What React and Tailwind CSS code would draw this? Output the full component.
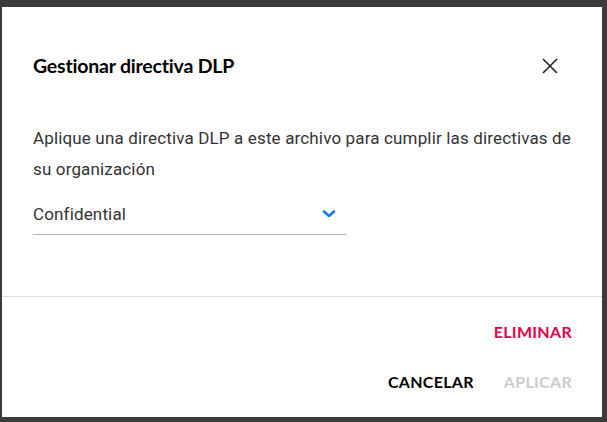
import React, { useState } from 'react';

function CloseIcon() {
  return (
    <svg width="18" height="18" viewBox="0 0 18 18" fill="none" stroke="#222" strokeWidth="1.6">
      <path d="M2 2 L16 16 M16 2 L2 16" />
    </svg>
  );
}

function Chevron() {
  return (
    <svg width="14" height="10" viewBox="0 0 14 10" fill="none" stroke="#0d7ff0" strokeWidth="2.6" strokeLinecap="round" strokeLinejoin="round">
      <path d="M2 2.5 L7 7 L12 2.5" />
    </svg>
  );
}

export default function App() {
  const [policy] = useState('Confidential');

  return (
    <div className="w-[607px] h-[422px] bg-[#3b3b3b] pt-[7px] pl-[2px] overflow-hidden" style={{ fontFamily: 'Lato, "Noto Sans", sans-serif' }}>
      <div className="w-[600px] h-[410px] bg-white flex flex-col">
        {/* Header */}
        <div className="flex items-center justify-between pl-[31px] pr-[43px] pt-[47px]">
          <h2 className="text-[19.5px] font-bold text-black leading-[24px] tracking-[-0.2px]">Gestionar directiva DLP</h2>
          <CloseIcon />
        </div>

        {/* Body */}
        <div className="pl-[31px] pr-[22px] pt-[45px] h-[218px] font-['Roboto',sans-serif]">
          <p className="text-[17px] leading-[31px] text-[#333] tracking-[0.15px]">
            Aplique una directiva DLP a este archivo para cumplir las directivas de su organización
          </p>
          <div className="mt-[17px] w-[313px] border-b border-[#b3b3b3] flex items-center justify-between pb-[8px] pr-[10px]">
            <span className="text-[17px] leading-[24px] text-[#333] tracking-[0.15px]">{policy}</span>
            <Chevron />
          </div>
        </div>

        {/* Footer */}
        <div className="border-t border-[#e0e0e0] flex flex-col items-end pr-[30px] pt-[24px]">
          <button className="text-[16px] font-bold text-[#e5004c] leading-[22px] tracking-[0.3px]">ELIMINAR</button>
          <div className="flex items-center gap-[30px] mt-[28px]">
            <button className="text-[16px] font-bold text-black leading-[22px] tracking-[0.3px]">CANCELAR</button>
            <button className="text-[16px] font-bold text-[#cccccc] leading-[22px] tracking-[0.3px]">APLICAR</button>
          </div>
        </div>
      </div>
    </div>
  );
}
